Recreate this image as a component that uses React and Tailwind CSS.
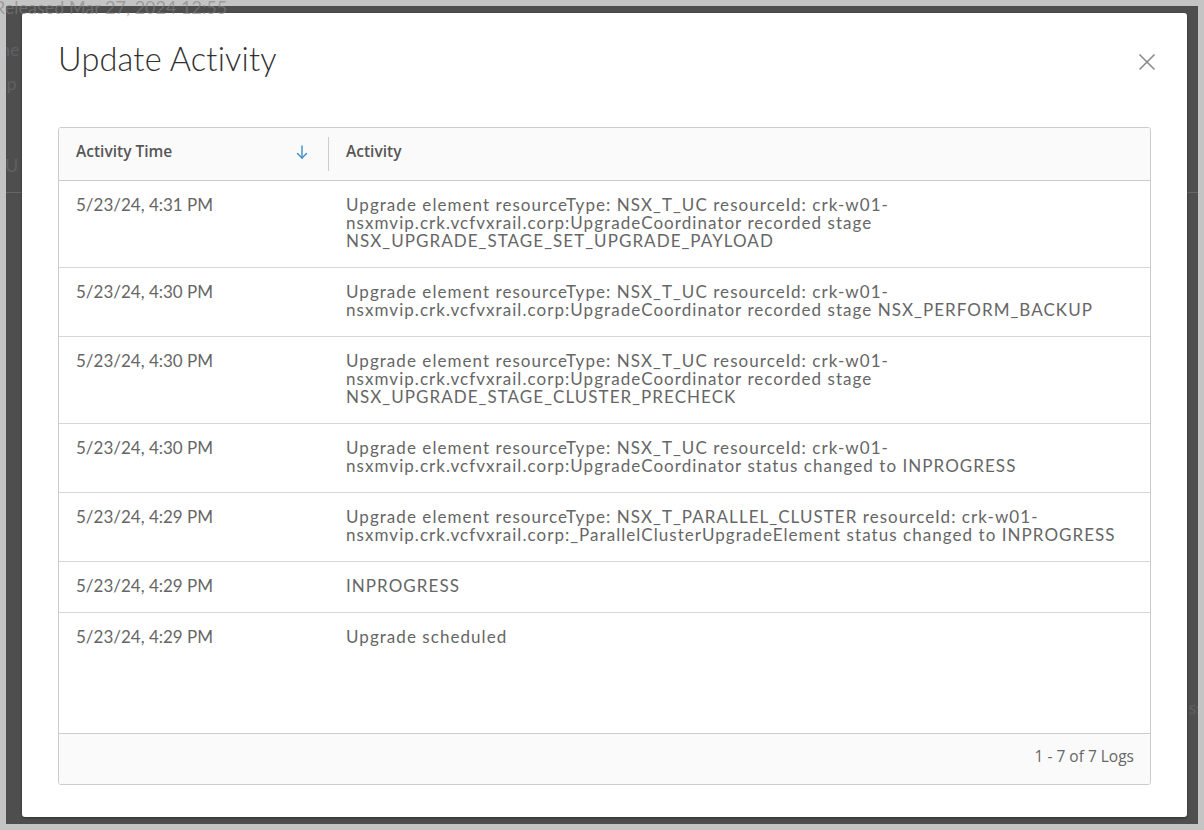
import React from "react";

const rows = [
  {
    time: "5/23/24, 4:31 PM",
    lines: [
      "Upgrade element resourceType: NSX_T_UC resourceId: crk-w01-",
      "nsxmvip.crk.vcfvxrail.corp:UpgradeCoordinator recorded stage",
      "NSX_UPGRADE_STAGE_SET_UPGRADE_PAYLOAD",
    ],
  },
  {
    time: "5/23/24, 4:30 PM",
    lines: [
      "Upgrade element resourceType: NSX_T_UC resourceId: crk-w01-",
      "nsxmvip.crk.vcfvxrail.corp:UpgradeCoordinator recorded stage NSX_PERFORM_BACKUP",
    ],
  },
  {
    time: "5/23/24, 4:30 PM",
    lines: [
      "Upgrade element resourceType: NSX_T_UC resourceId: crk-w01-",
      "nsxmvip.crk.vcfvxrail.corp:UpgradeCoordinator recorded stage",
      "NSX_UPGRADE_STAGE_CLUSTER_PRECHECK",
    ],
  },
  {
    time: "5/23/24, 4:30 PM",
    lines: [
      "Upgrade element resourceType: NSX_T_UC resourceId: crk-w01-",
      "nsxmvip.crk.vcfvxrail.corp:UpgradeCoordinator status changed to INPROGRESS",
    ],
  },
  {
    time: "5/23/24, 4:29 PM",
    lines: [
      "Upgrade element resourceType: NSX_T_PARALLEL_CLUSTER resourceId: crk-w01-",
      "nsxmvip.crk.vcfvxrail.corp:_ParallelClusterUpgradeElement status changed to INPROGRESS",
    ],
  },
  { time: "5/23/24, 4:29 PM", lines: ["INPROGRESS"] },
  { time: "5/23/24, 4:29 PM", lines: ["Upgrade scheduled"], last: true },
];

export default function App() {
  return (
    <div className="relative w-[1204px] h-[830px] bg-[#c4c4c4] p-[6px] overflow-hidden">
      <div className="relative w-full h-full bg-[#4e4e4e] overflow-hidden">
        {/* faint underlying page */}
        <div className="absolute left-[-6px] top-[30px] text-[18px] text-[#606060] font-['Lato',sans-serif]">ne</div>
        <div className="absolute left-[-6px] top-[64px] text-[18px] text-[#606060] font-['Lato',sans-serif]">tp</div>
        <div className="absolute left-[-1px] top-[146px] text-[18px] text-[#606060] font-['Lato',sans-serif]">U</div>
        <div className="absolute left-0 top-[186px] w-[30px] h-px bg-[#666]"></div>
        <div className="absolute right-0 top-[186px] w-[30px] h-px bg-[#666]"></div>
        <div className="absolute right-[-6px] top-[688px] text-[18px] text-[#606060] font-['Lato',sans-serif]">ss</div>

        {/* modal */}
        <div className="absolute left-[16px] top-[7px] w-[1165px] h-[804px] bg-white rounded-[3px] shadow-[0_1px_3px_rgba(0,0,0,0.4)] flex flex-col px-[36px] pt-[26px] pb-[32px]">
          <button className="absolute right-[31px] top-[40px] w-[18px] h-[18px] flex items-center justify-center">
            <svg width="18" height="18" viewBox="0 0 18 18" fill="none" stroke="#8a8a8a" strokeWidth="1.6">
              <line x1="1.5" y1="1.5" x2="16.5" y2="16.5" />
              <line x1="16.5" y1="1.5" x2="1.5" y2="16.5" />
            </svg>
          </button>
          <h1 className="font-['Lato',sans-serif] font-light text-[32.5px] leading-[40px] text-[#313131] tracking-[0.2px]">
            Update Activity
          </h1>
          <div className="mt-[48px] flex-1 flex flex-col border border-[#cccccc] rounded-[3px] overflow-hidden">
            <div className="flex h-[53px] shrink-0 pb-[5px] bg-[#fafafa] border-b border-[#cccccc] items-center font-['Open_Sans',sans-serif] font-semibold text-[15.5px] text-[#565656]">
              <div className="w-[269px] pl-[17px] pr-[20px] flex items-center justify-between">
                <span>Activity Time</span>
                <svg width="12" height="14" viewBox="0 0 12 14" fill="none" stroke="#3a8dc7" strokeWidth="1.4" strokeLinecap="round" strokeLinejoin="round">
                  <line x1="6" y1="1" x2="6" y2="13" />
                  <polyline points="1.5,8.5 6,13 10.5,8.5" />
                </svg>
              </div>
              <div className="w-px h-[34px] mt-[5px] bg-[#cccccc]"></div>
              <div className="pl-[17px]">Activity</div>
            </div>
            <div className="flex-1 font-['Lato',sans-serif] text-[17px] leading-[18px] text-[#666666]">
              {rows.map((r, i) => (
                <div
                  key={i}
                  className={
                    "flex pt-[15px] pb-[17px] " + (r.last ? "" : "border-b border-[#d6d6d6]")
                  }
                >
                  <div className="w-[270px] pl-[17px] shrink-0">{r.time}</div>
                  <div className="pl-[17px] tracking-[1.05px]">
                    {r.lines.map((l, j) => (
                      <div key={j} className="whitespace-nowrap">{l}</div>
                    ))}
                  </div>
                </div>
              ))}
            </div>
            <div className="h-[51px] shrink-0 pb-[5px] bg-[#fafafa] border-t border-[#cccccc] flex items-center justify-end pr-[16px] font-['Open_Sans',sans-serif] text-[15.5px] text-[#666666]">
              1 - 7 of 7 Logs
            </div>
          </div>
        </div>
      </div>
      <div className="absolute left-[-6px] top-[-6px] text-[18px] text-[#808080]/60 font-['Lato',sans-serif] whitespace-nowrap">
        Released Mar 27, 2024 12:55
      </div>
    </div>
  );
}
